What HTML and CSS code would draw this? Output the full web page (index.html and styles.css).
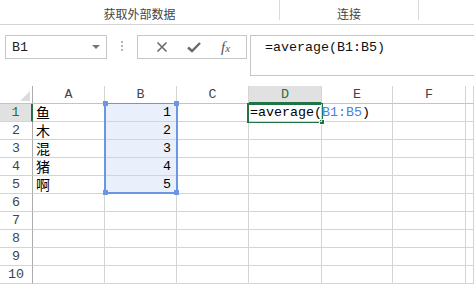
FILE: index.html
```html
<!DOCTYPE html>
<html>
	<head>
		<meta charset="utf-8">
		<title>Excel</title>
		<link rel="stylesheet" href="styles.css">
	</head>
	<body>
		<div class="ribbon">
			<div class="group g1"><span>获取外部数据</span></div>
			<div class="group g2"><span>连接</span></div>
		</div>
		<div class="fbar">
			<div class="namebox">
				<span>B1</span>
				<i class="caret"></i>
			</div>
			<div class="dots"><i></i><i></i><i></i></div>
			<div class="btns">
				<svg width="12" height="12" viewBox="0 0 12 12"><path d="M1.5 1.5L10.5 10.5M10.5 1.5L1.5 10.5" stroke="#6a6a6a" stroke-width="1.6" fill="none"/></svg>
				<svg width="14" height="12" viewBox="0 0 14 12"><path d="M1 6.5L5 10L13 2" stroke="#6a6a6a" stroke-width="2.4" fill="none"/></svg>
				<span class="fx">f<small>x</small></span>
			</div>
			<div class="input">=average(B1:B5)</div>
		</div>
		<div class="sheet">
			<div class="grid">
				<div class="hd corner"><i></i></div>
				<div class="hd">A</div>
				<div class="hd">B</div>
				<div class="hd">C</div>
				<div class="hd cur">D</div>
				<div class="hd">E</div>
				<div class="hd">F</div>
				<div class="hd"></div>

				<div class="rh cur">1</div><div class="c">鱼</div><div class="c n sel">1</div><div class="c"></div><div class="c f">=average(<b>B1:B5</b>)</div><div class="c"></div><div class="c"></div><div class="c"></div>
				<div class="rh">2</div><div class="c">木</div><div class="c n sel">2</div><div class="c"></div><div class="c"></div><div class="c"></div><div class="c"></div><div class="c"></div>
				<div class="rh">3</div><div class="c">混</div><div class="c n sel">3</div><div class="c"></div><div class="c"></div><div class="c"></div><div class="c"></div><div class="c"></div>
				<div class="rh">4</div><div class="c">猪</div><div class="c n sel">4</div><div class="c"></div><div class="c"></div><div class="c"></div><div class="c"></div><div class="c"></div>
				<div class="rh">5</div><div class="c">啊</div><div class="c n sel">5</div><div class="c"></div><div class="c"></div><div class="c"></div><div class="c"></div><div class="c"></div>
				<div class="rh">6</div><div class="c"></div><div class="c"></div><div class="c"></div><div class="c"></div><div class="c"></div><div class="c"></div><div class="c"></div>
				<div class="rh">7</div><div class="c"></div><div class="c"></div><div class="c"></div><div class="c"></div><div class="c"></div><div class="c"></div><div class="c"></div>
				<div class="rh">8</div><div class="c"></div><div class="c"></div><div class="c"></div><div class="c"></div><div class="c"></div><div class="c"></div><div class="c"></div>
				<div class="rh">9</div><div class="c"></div><div class="c"></div><div class="c"></div><div class="c"></div><div class="c"></div><div class="c"></div><div class="c"></div>
				<div class="rh">10</div><div class="c"></div><div class="c"></div><div class="c"></div><div class="c"></div><div class="c"></div><div class="c"></div><div class="c"></div>
			</div>
			<div class="range">
				<i class="k tl"></i><i class="k tr"></i><i class="k bl"></i><i class="k br"></i>
			</div>
			<div class="active"><i class="handle"></i></div>
		</div>
	</body>
</html>
```
FILE: styles.css
```css
*{
	padding: 0;
	margin: 0;
	box-sizing: border-box;
}
body{
	width: 474px;
	height: 285px;
	overflow: hidden;
	background: #fff;
	font-family: "Liberation Mono", "Noto Sans CJK SC", monospace;
}
.ribbon{
	height: 25px;
	border-bottom: 1px solid #d5d5d5;
	display: flex;
}
.group{
	height: 20px;
	border-right: 1px solid #dadada;
	text-align: center;
	font: 12px/16px "Noto Sans CJK SC", sans-serif;
	color: #444;
	padding-top: 6px;
}
.g1{
	width: 280px;
}
.g2{
	width: 139px;
}
.fbar{
	display: flex;
	margin-top: 10px;
	height: 41px;
}
.namebox{
	margin-left: 5px;
	width: 102px;
	height: 24px;
	border: 1px solid #c6c6c6;
	display: flex;
	align-items: center;
	justify-content: space-between;
	padding: 0 6px 0 6px;
	font-size: 13.33px;
	color: #222;
}
.caret{
	width: 0;
	height: 0;
	border-left: 4px solid transparent;
	border-right: 4px solid transparent;
	border-top: 4px solid #777;
}
.dots{
	width: 30px;
	display: flex;
	flex-direction: column;
	align-items: center;
	padding-top: 6px;
	gap: 2px;
}
.dots i{
	width: 2px;
	height: 2px;
	background: #b4b4b4;
}
.btns{
	width: 110px;
	height: 24px;
	border: 1px solid #c6c6c6;
	display: flex;
	align-items: center;
	justify-content: space-around;
	padding: 0 6px 0 8px;
}
.fx{
	font: italic 15px "Liberation Serif", serif;
	color: #555;
}
.fx small{
	font-size: 11px;
}
.input{
	margin-left: 3px;
	flex: 1;
	height: 41px;
	border: 1px solid #c6c6c6;
	border-right: none;
	padding: 4px 0 0 14px;
	font-size: 13.33px;
	line-height: 16px;
	color: #111;
}
.sheet{
	position: relative;
	margin-top: 10px;
}
.grid{
	display: grid;
	grid-template-columns: 33px 72px 72px 72px 73px 71px 73px 1fr;
	grid-auto-rows: 18px;
}
.hd,.rh{
	border-right: 1px solid #d4d4d4;
	border-bottom: 1px solid #c4c4c4;
	font-size: 13.33px;
	line-height: 17px;
	color: #444;
	text-align: center;
}
.rh{
	border-right: 1px solid #ababab;
	border-bottom-color: #d4d4d4;
}
.corner{
	border-right: 1px solid #ababab;
	position: relative;
}
.corner i{
	position: absolute;
	right: 2px;
	bottom: 2px;
	width: 0;
	height: 0;
	border-left: 10px solid transparent;
	border-bottom: 10px solid #dcdcdc;
}
.hd.cur{
	background: #e1e1e1;
	color: #217346;
	border-bottom: 2px solid #217346;
}
.rh.cur{
	background: #e1e1e1;
	color: #217346;
	border-right: 2px solid #217346;
}
.c{
	border-right: 1px solid #d4d4d4;
	border-bottom: 1px solid #d4d4d4;
	font: 14px/17px "Noto Sans CJK SC", sans-serif;
	color: #000;
	padding-left: 3px;
	white-space: nowrap;
}
.c.n{
	text-align: right;
	padding-right: 5px;
	font: 13.33px/17px "Liberation Mono", monospace;
}
.c.sel{
	background: #eaf0fb;
}
.c.f{
	font: 13.33px/17px "Liberation Mono", monospace;
	padding-left: 1px;
	position: relative;
	z-index: 2;
}
.c.f b{
	font-weight: normal;
	color: #4d80e0;
}
.range{
	position: absolute;
	left: 104px;
	top: 17px;
	width: 74px;
	height: 91px;
	border: 2px solid #6a97e4;
	border-top-width: 1px;
}
.k{
	position: absolute;
	width: 5px;
	height: 5px;
	background: #6a97e4;
}
.tl{ left: -3px; top: -3px; }
.tr{ right: -3px; top: -3px; }
.bl{ left: -3px; bottom: -3px; }
.br{ right: -3px; bottom: -3px; }
.active{
	position: absolute;
	left: 247px;
	top: 17px;
	width: 76px;
	height: 20px;
	border: 2px solid #217346;
	z-index: 1;
}
.handle{
	position: absolute;
	right: -4px;
	bottom: -4px;
	width: 6px;
	height: 6px;
	background: #217346;
	border: 1px solid #fff;
}
```
